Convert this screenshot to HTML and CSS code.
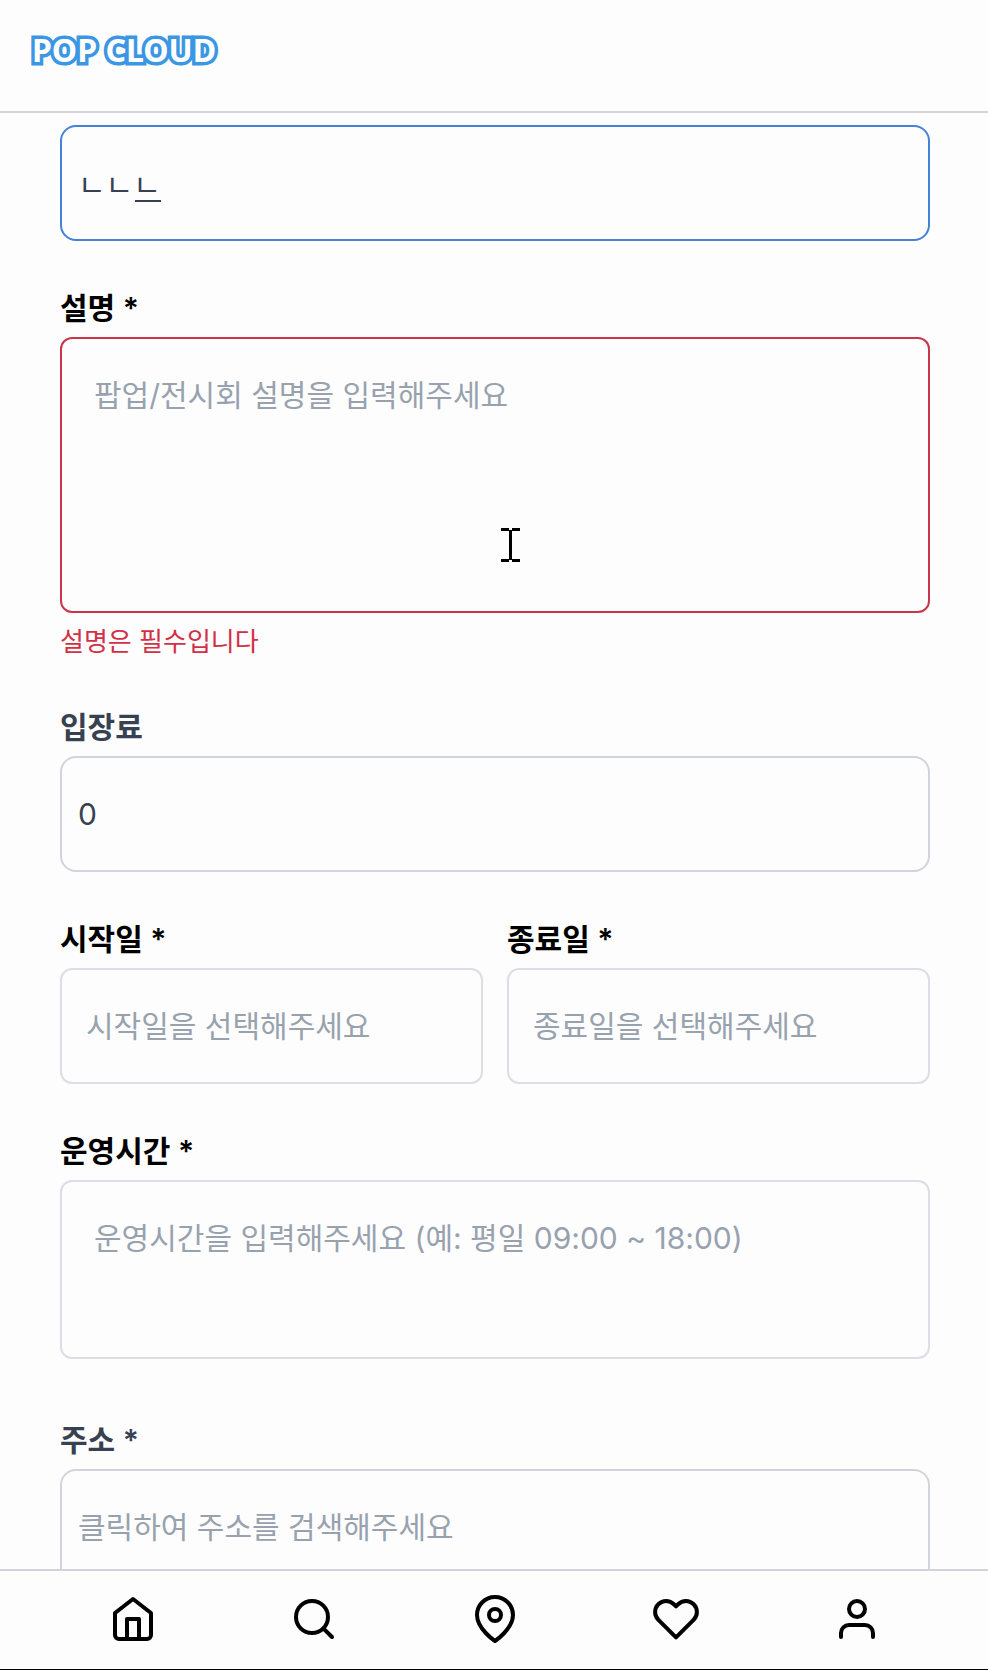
FILE: index.html
```
<!DOCTYPE html>
<html lang="ko">
<head>
    <meta charset="UTF-8">
    <meta name="viewport" content="width=device-width, initial-scale=1.0">
    <title>POP CLOUD</title>
    <link rel="stylesheet" href="styles.css">
</head>
<body>
    <header class="header">
        <a class="logo" href="#">POP CLOUD</a>
    </header>

    <main class="content">
        <form class="form">
            <div class="field">
                <div class="control">
                    <input class="input focused" type="text" id="title" aria-label="제목" value="ㄴㄴㄴ">
                    <span class="composing"></span>
                </div>
            </div>

            <div class="field">
                <label class="label required" for="description">설명 *</label>
                <div class="control">
                    <textarea class="textarea tall error" id="description" placeholder="팝업/전시회 설명을 입력해주세요"></textarea>
                    <svg class="cursor" viewBox="0 0 19 34" fill="none" stroke="#000" stroke-width="3">
                        <path d="M0 1.5h8M11 1.5h8M9.5 2v30M0 32.5h8M11 32.5h8"/>
                    </svg>
                </div>
                <p class="error-text">설명은 필수입니다</p>
            </div>

            <div class="field">
                <label class="label" for="fee">입장료</label>
                <input class="input" type="text" inputmode="numeric" id="fee" value="0">
            </div>

            <div class="field row">
                <div>
                    <label class="label required" for="start">시작일 *</label>
                    <input class="input date" type="text" id="start" placeholder="시작일을 선택해주세요">
                </div>
                <div>
                    <label class="label required" for="end">종료일 *</label>
                    <input class="input date" type="text" id="end" placeholder="종료일을 선택해주세요">
                </div>
            </div>

            <div class="field hours">
                <label class="label required" for="hours">운영시간 *</label>
                <textarea class="textarea" id="hours" placeholder="운영시간을 입력해주세요 (예: 평일 09:00 ~ 18:00)"></textarea>
            </div>

            <div class="field">
                <label class="label" for="address">주소 *</label>
                <input class="input" type="text" id="address" placeholder="클릭하여 주소를 검색해주세요" readonly>
            </div>
        </form>
    </main>

    <nav class="bottom-nav">
        <a href="#" aria-label="홈">
            <svg class="icon" viewBox="0 0 24 24">
                <path d="M3 9l9-7 9 7v11a2 2 0 0 1-2 2H5a2 2 0 0 1-2-2z"/>
                <path d="M9 22V12h6v10"/>
            </svg>
        </a>
        <a href="#" aria-label="검색">
            <svg class="icon" viewBox="0 0 24 24">
                <circle cx="11" cy="11" r="8"/>
                <path d="M21 21l-4.35-4.35"/>
            </svg>
        </a>
        <a href="#" aria-label="지도">
            <svg class="icon" viewBox="0 0 24 24">
                <path d="M21 10c0 7-9 13-9 13s-9-6-9-13a9 9 0 0 1 18 0z"/>
                <circle cx="12" cy="10" r="3"/>
            </svg>
        </a>
        <a href="#" aria-label="찜">
            <svg class="icon" viewBox="0 0 24 24">
                <path d="M20.84 4.61a5.5 5.5 0 0 0-7.78 0L12 5.67l-1.06-1.06a5.5 5.5 0 0 0-7.78 7.78l1.06 1.06L12 21.23l7.78-7.78 1.06-1.06a5.5 5.5 0 0 0 0-7.78z"/>
            </svg>
        </a>
        <a href="#" aria-label="마이페이지">
            <svg class="icon" viewBox="0 0 24 24">
                <path d="M20 21v-2a4 4 0 0 0-4-4H8a4 4 0 0 0-4 4v2"/>
                <circle cx="12" cy="7" r="4"/>
            </svg>
        </a>
    </nav>
</body>
</html>
```

FILE: styles.css
```
* {
    box-sizing: border-box;
}
body {
    margin: 0;
    height: 100vh;
    display: flex;
    flex-direction: column;
    overflow: hidden;
    background: #fdfdfd;
    color: #374151;
    font-family: Inter, "Noto Sans CJK KR", sans-serif;
    font-size: 30px;
}
.header {
    flex: none;
    padding: 30px 30px 41px;
    border-bottom: 2px solid #d3d3dd;
}
.logo {
    display: block;
    padding-left: 2px;
    font-family: "Noto Sans", sans-serif;
    font-size: 32px;
    font-weight: 700;
    line-height: 40px;
    color: #fff;
    text-decoration: none;
    -webkit-text-stroke: 7px #3b97e3;
    paint-order: stroke fill;
}
.content {
    flex: 1;
    min-height: 0;
    overflow: hidden;
    padding: 12px 58px 0 60px;
}
.field {
    margin-bottom: 46px;
}
.field.hours {
    margin-bottom: 60px;
}
.row {
    display: grid;
    grid-template-columns: 1fr 1fr;
    gap: 24px;
}
.control {
    position: relative;
}
.label {
    display: block;
    margin-bottom: 8px;
    font-weight: 600;
    line-height: 42px;
}
.required {
    color: #000;
}
.input,
.textarea {
    display: block;
    width: 100%;
    margin: 0;
    border: 2px solid #d1d4dc;
    background: transparent;
    color: inherit;
    font: inherit;
    line-height: 48px;
    outline: none;
}
.input {
    height: 116px;
    padding: 0 16px;
    border-radius: 16px;
}
.input.focused {
    border-color: #4382d8;
}
.input.date {
    padding: 0 24px;
    border-color: #dddde6;
    border-radius: 12px;
}
.textarea {
    height: 179px;
    padding: 32px;
    border-color: #dddde6;
    border-radius: 12px;
    resize: none;
}
.textarea.tall {
    height: 276px;
}
.textarea.error {
    border-color: #c9364a;
}
.input::placeholder,
.textarea::placeholder {
    color: #98a2ae;
    opacity: 1;
}
.error-text {
    margin: 11px 0 0;
    font-size: 26px;
    line-height: 36px;
    color: #d32f45;
}
/* underline of the syllable still being composed */
.composing {
    position: absolute;
    left: 75px;
    top: 75px;
    width: 26px;
    height: 2px;
    background: #374151;
}
.cursor {
    position: absolute;
    left: 441px;
    top: 191px;
    width: 19px;
    height: 34px;
}
.bottom-nav {
    flex: none;
    display: flex;
    justify-content: space-around;
    padding: 24px 40px 26px 42px;
    border-top: 2px solid #d1d4dc;
    border-bottom: 1px solid #000;
}
.bottom-nav a {
    display: block;
}
.icon {
    display: block;
    width: 48px;
    height: 48px;
    fill: none;
    stroke: #000;
    stroke-width: 2;
    stroke-linecap: round;
    stroke-linejoin: round;
}
```
